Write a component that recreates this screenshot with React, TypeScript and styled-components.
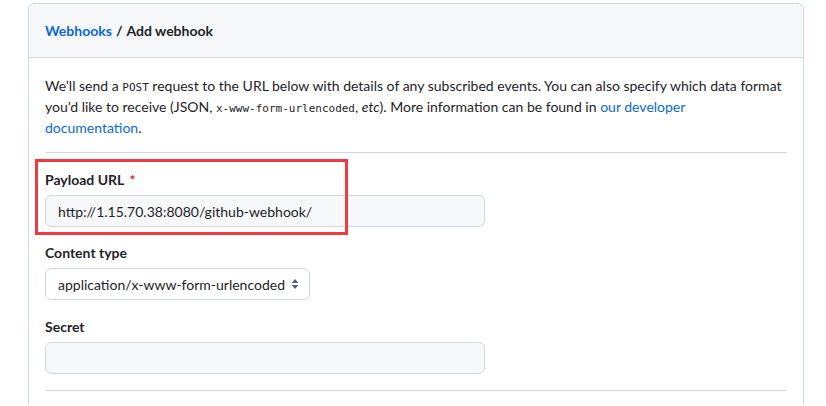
import React from "react";
import styled, { createGlobalStyle } from "styled-components";

const Global = createGlobalStyle`
  html, body { margin: 0; padding: 0; background: #ffffff; }
  body {
    font-family: Lato, "Noto Sans", "Liberation Sans", sans-serif;
    font-size: 14px;
    color: #1f2328;
  }
`;

const Page = styled.div`
  padding: 3px 0 0 28px;
  width: 776px;
`;

const Card = styled.div`
  border: 1px solid #d0d7de;
  border-bottom: none;
  border-radius: 6px 6px 0 0;
  background: #ffffff;
`;

const Header = styled.div`
  height: 53px;
  display: flex;
  align-items: center;
  padding: 0 16px;
  background: #f6f8fa;
  border-bottom: 1px solid #d0d7de;
  border-radius: 6px 6px 0 0;
  font-weight: 700;
  font-size: 14px;
`;

const Link = styled.a`
  color: #0969da;
  text-decoration: none;
`;

const Sep = styled.span`
  color: #1f2328;
  margin: 0 4px;
`;

const Body = styled.div`
  padding: 17px 16px 14px 16px;
`;

const Intro = styled.p`
  margin: 0;
  line-height: 21px;
`;

const Code = styled.code`
  font-family: "DejaVu Sans Mono", "Liberation Mono", monospace;
  font-size: 11px;
  line-height: 1;
`;

const Divider = styled.hr<{ $flush?: boolean }>`
  border: none;
  border-top: 1px solid #d0d7de;
  margin: ${(p) => (p.$flush ? "0" : "14px 0 16px 0")};
`;

const FormGroup = styled.div<{ $gap?: number }>`
  position: relative;
  margin-bottom: ${(p) => p.$gap ?? 16}px;
`;

const Label = styled.label`
  display: block;
  font-weight: 700;
  line-height: 21px;
  margin-bottom: 5px;
`;

const Required = styled.span`
  color: #cf222e;
  margin-left: 2px;
`;

const TextInput = styled.div<{ $width: number }>`
  box-sizing: border-box;
  width: ${(p) => p.$width}px;
  height: 32px;
  display: flex;
  align-items: center;
  padding: 0 12px;
  background: #f6f8fa;
  border: 1px solid #d0d7de;
  border-radius: 6px;
  font-size: 14px;
  color: #1f2328;
  white-space: nowrap;
`;

const Select = styled(TextInput)`
  background: #ffffff;
  justify-content: space-between;
  padding: 0 10px 0 12px;
`;

const Highlight = styled.div`
  position: absolute;
  left: -10px;
  top: -10px;
  width: 313px;
  height: 76px;
  box-sizing: border-box;
  border: 3px solid #ef3b3f;
  pointer-events: none;
`;

const Arrows = () => (
  <svg width="8" height="12" viewBox="0 0 8 12" aria-hidden>
    <path d="M4 1 L7.5 5 H0.5 Z" fill="#59636e" />
    <path d="M4 11 L7.5 7 H0.5 Z" fill="#59636e" />
  </svg>
);

export default function App() {
  return (
    <>
      <Global />
      <Page>
        <Card>
          <Header>
            <Link href="#">Webhooks</Link>
            <Sep>/</Sep>
            <span>Add webhook</span>
          </Header>
          <Body>
            <Intro>
              We’ll send a <Code>POST</Code> request to the URL below with details of any
              subscribed events. You can also specify which data format you’d like to receive
              (JSON, <Code>x-www-form-urlencoded</Code>, <em>etc</em>). More information can be
              found in{" "}
              <Link href="#">
                our developer
                <br />
                documentation
              </Link>
              .
            </Intro>
            <Divider />
            <FormGroup $gap={15}>
              <Highlight />
              <Label>
                Payload URL <Required>*</Required>
              </Label>
              <TextInput $width={440}>http://1.15.70.38:8080/github-webhook/</TextInput>
            </FormGroup>
            <FormGroup>
              <Label>Content type</Label>
              <Select $width={265}>
                <span>application/x-www-form-urlencoded</span>
                <Arrows />
              </Select>
            </FormGroup>
            <FormGroup>
              <Label>Secret</Label>
              <TextInput $width={440} />
            </FormGroup>
            <Divider $flush />
          </Body>
        </Card>
      </Page>
    </>
  );
}
